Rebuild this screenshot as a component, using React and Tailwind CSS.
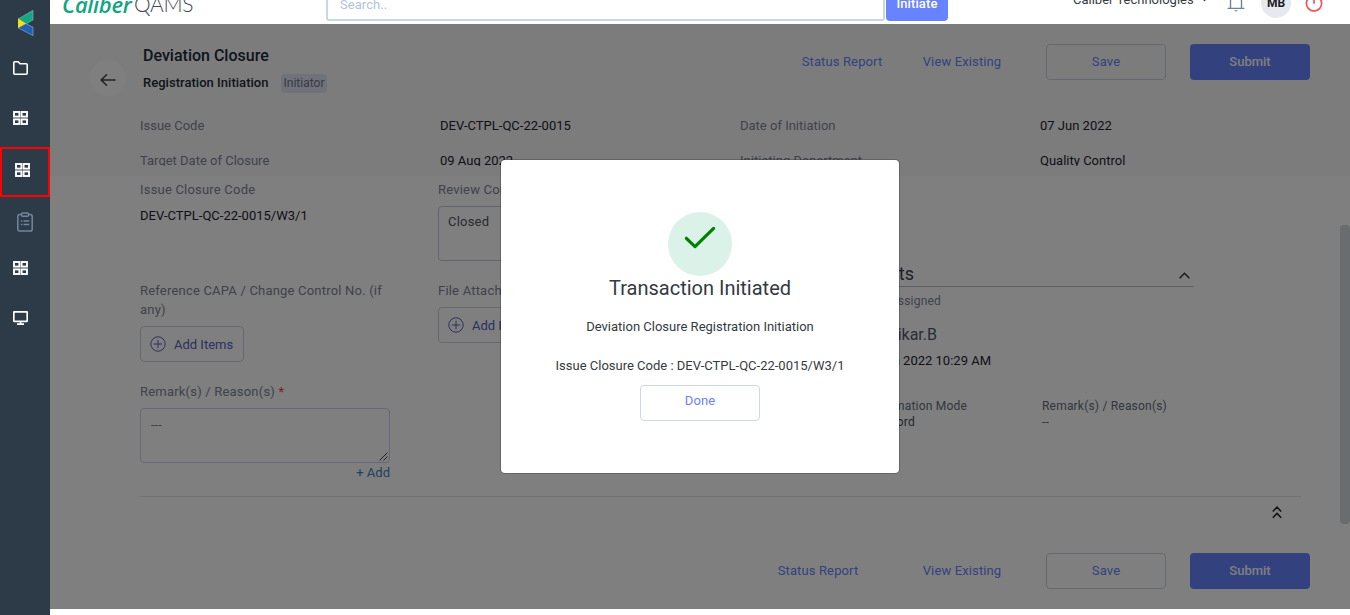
import React from "react";

function GridIcon() {
  return (
    <svg width="15" height="14" viewBox="0 0 15 14" fill="none" stroke="#fff" strokeWidth="1.9">
      <rect x="1" y="1" width="5.4" height="4.6" />
      <rect x="8.6" y="1" width="5.4" height="4.6" />
      <rect x="1" y="8.4" width="5.4" height="4.6" />
      <rect x="8.6" y="8.4" width="5.4" height="4.6" />
    </svg>
  );
}

function Sidebar() {
  return (
    <nav className="flex h-full w-[50px] shrink-0 flex-col bg-[#2d3a48] text-white">
      <div className="flex h-[43px] pl-[17px] pt-[9px]">
        <svg width="18" height="29" viewBox="0 0 18 29">
          <path d="M16 1.3 1 10l7.6 5.2L16 11z" fill="#12a785" stroke="#8fb5b0" strokeWidth=".6" />
          <path d="M8.8 14.6 16 18.2v8.4L1 18.8z" fill="#2360b5" stroke="#9db4d0" strokeWidth=".6" />
          <path d="M1 9.4v9.6l8-4.6z" fill="#f7dd13" />
        </svg>
      </div>
      <div className="flex h-[50px] items-center pl-[13px]">
        <svg width="15" height="14" viewBox="0 0 15 14" fill="none" stroke="#fff" strokeWidth="1.6" strokeLinejoin="round">
          <path d="M.8 1.8a1 1 0 0 1 1-1h3.4L7 2.8h6.2a1 1 0 0 1 1 1v8.4a1 1 0 0 1-1 1H1.8a1 1 0 0 1-1-1z" />
        </svg>
      </div>
      <div className="flex h-[50px] items-center pl-[13px]"><GridIcon /></div>
      <div className="mt-1 flex h-[50px] items-center border-2 border-[#f00] pb-1 pl-[13px]"><GridIcon /></div>
      <div className="flex h-[50px] items-center justify-center">
        <svg width="16" height="20" viewBox="0 0 16 20" fill="none" stroke="#75879c" strokeWidth="1.5" strokeLinejoin="round">
          <path d="M4.5 2.5H2.6A1.8 1.8 0 0 0 .8 4.3v12.9A1.8 1.8 0 0 0 2.6 19h10.8a1.8 1.8 0 0 0 1.8-1.8V4.3a1.8 1.8 0 0 0-1.8-1.8h-1.9" />
          <rect x="4.5" y=".9" width="7" height="3.3" rx="1.3" />
          <path d="M3.8 9h1.5M6.5 9h5.7M3.8 12.6h1.5M6.5 12.6h5.7" />
        </svg>
      </div>
      <div className="flex h-[42px] items-center pl-[13px]"><GridIcon /></div>
      <div className="flex h-[58px] items-center pl-[13px]">
        <svg width="15" height="14" viewBox="0 0 15 14" fill="none" stroke="#fff" strokeWidth="1.7" strokeLinejoin="round">
          <rect x=".8" y=".8" width="13.4" height="9.6" rx=".6" /><path d="M7.5 10v3M4 13.1h7" />
        </svg>
      </div>
    </nav>
  );
}

function Header() {
  return (
    <header className="flex h-6 shrink-0 items-end overflow-hidden bg-white">
      <div className="flex h-10 w-[276px] shrink-0 items-end pb-[7px] pl-[12px] leading-[26px]">
        <span className="w-[72px] whitespace-nowrap font-['Open_Sans'] text-[22px] font-semibold italic tracking-[-0.3px] text-[#12a583]">Caliber</span>
        <span className="whitespace-nowrap font-[Lato] text-[21px] font-light tracking-[-0.3px] text-[#3f4652]">QAMS</span>
      </div>
      <div className="mb-[3px] flex h-9 w-[559px] shrink-0 items-center rounded-[3px] border-2 border-[#c9d6e4] pl-3 pt-1 text-[13px] tracking-[0.05px] text-[#b4c2db]">Search..</div>
      <div className="mb-[3px] ml-px flex h-9 w-[62px] shrink-0 items-center justify-center rounded-[4px] bg-[#6783ff] pt-[2px] text-[13px] font-medium tracking-[0.1px] text-white">Initiate</div>
      <div className="flex h-10 grow items-center">
        <span className="ml-[125px] w-[122px] whitespace-nowrap pb-2 text-[13px] text-[#343b45]">Caliber Technologies</span>
        <svg className="ml-[7px] mb-2" width="5" height="4" viewBox="0 0 5 4"><path d="M0 .5h5L2.5 3.5z" fill="#343b45" /></svg>
        <svg className="ml-[20px] mb-[3px]" width="18" height="20" viewBox="0 0 18 20" fill="none" stroke="#71839a" strokeWidth="1.4">
          <path d="M3.5 15V8a5.5 5.5 0 0 1 11 0v7M.6 15.4h16.8" /><path d="M7 17.2h4l-2 1.6z" fill="#71839a" stroke="none" />
        </svg>
        <div className="ml-4 mb-[3px] flex size-[30px] items-center justify-center rounded-full bg-[#e6eaee] text-[12px] font-bold text-[#1c2024]">MB</div>
        <svg className="ml-[14px] mb-[2px]" width="18" height="20" viewBox="0 0 18 20" fill="none" stroke="#f4515c" strokeWidth="1.7" strokeLinecap="round">
          <path d="M5 4a7.6 7.6 0 1 0 8 0M9 1v9" />
        </svg>
      </div>
    </header>
  );
}

function Actions({ spread }) {
  return (
    <div className="flex text-center text-[13px] leading-9 tracking-[0.13px] text-[#6783ff]">
      <span className={spread ? "mr-6 w-[120px]" : "w-[120px]"}>Status Report</span>
      <span className="mr-6 w-[120px]">View Existing</span>
      <span className="mr-6 h-9 w-[120px] rounded-[4px] border border-[#c9d3e0] leading-[34px]">Save</span>
      <span className="h-9 w-[120px] rounded-[4px] bg-[#6783ff] font-medium tracking-normal text-white">Submit</span>
    </div>
  );
}

function AddItems() {
  return (
    <div className="flex h-9 w-[104px] items-center whitespace-nowrap rounded-[4px] border border-[#c9d3e0] pl-[9px] tracking-normal text-[#5560c4]">
      <svg className="mr-2 shrink-0" width="16" height="16" viewBox="0 0 16 16" fill="none" stroke="currentColor"><circle cx="8" cy="8" r="7.2" /><path d="M8 3.8v8.4M3.8 8h8.4" /></svg>
      <span className="pt-px">Add Items</span>
    </div>
  );
}

const info = [
  ["Issue Code", "DEV-CTPL-QC-22-0015", "Date of Initiation", "07 Jun 2022"],
  ["Target Date of Closure", "09 Aug 2022", "Initiating Department", "Quality Control"],
];

function PageHead() {
  return (
    <section className="h-[152px] shrink-0 bg-[#f9f9f9] tracking-normal">
      <div className="flex h-[84px] pl-10 pr-10 pt-5">
        <div className="mt-4 flex size-9 items-center justify-center rounded-full bg-white">
          <svg className="mt-1" width="16" height="14" viewBox="0 0 16 14" fill="none" stroke="#3b424c" strokeWidth="1.5"><path d="M15.5 7H1.5M7 1.2 1.2 7 7 12.8" /></svg>
        </div>
        <div className="ml-[17px] grow">
          <h1 className="h-6 text-[16px] font-medium leading-6 text-[#212b3a]">Deviation Closure</h1>
          <div className="mt-[5px] flex h-5 items-center">
            <h2 className="w-[138px] whitespace-nowrap text-[13px] font-medium tracking-[0.03px] text-[#212b3a]">Registration Initiation</h2>
            <span className="h-[19px] w-[46px] rounded-[4px] bg-[#e1e5f7] text-center text-[12px] leading-[19px] text-[#6e7484]">Initiator</span>
          </div>
        </div>
        <Actions />
      </div>
      <div className="h-[58px] overflow-hidden pl-[90px]">
        {info.map((r) => (
          <div key={r[0]} className="grid h-[35px] grid-cols-[300px_300px_300px_200px] leading-[35px]">
            <span className="text-[#7d8594]">{r[0]}</span>
            <span className="text-[#1d2430]">{r[1]}</span>
            <span className="text-[#7d8594]">{r[2]}</span>
            <span className="text-[#1d2430]">{r[3]}</span>
          </div>
        ))}
      </div>
    </section>
  );
}

function Form() {
  return (
    <div className="flex h-[320px] text-[#7d8594]">
      <div className="w-[250px] pt-1">
        <p className="h-[26px] leading-5">Issue Closure Code</p>
        <p className="h-[75px] leading-5 tracking-normal text-[#1d2430]">DEV-CTPL-QC-22-0015/W3/1</p>
        <p className="h-[45px] leading-[19px]">Reference CAPA / Change Control No. (if any)</p>
        <AddItems />
        <p className="mt-5 h-[26px] leading-5">Remark(s) / Reason(s) <span className="text-[#f03a48]">*</span></p>
        <div className="flex h-[55px] justify-between rounded-[4px] border border-[#cdd0ee] pl-[10px] pt-[6px] leading-5 tracking-normal">
          ---
          <svg className="mt-auto mr-px mb-px" width="9" height="9" viewBox="0 0 9 9" stroke="#444"><path d="M.5 8.5l8-8M4.5 8.5l4-4" /></svg>
        </div>
        <p className="text-right leading-5 tracking-normal text-[#3b82c4]">+ Add</p>
      </div>
      <div className="ml-12 w-[250px] pt-1">
        <p className="h-[26px] leading-5">Review Comments</p>
        <div className="h-[55px] rounded-[4px] border border-[#c3cbe0] pl-[9px] pt-[5px] leading-5 text-[#4c5564]">Closed</div>
        <p className="mt-5 h-[26px] leading-5">File Attachments</p>
        <AddItems />
      </div>
      <div className="ml-[52px] w-[454px] pt-[84px]">
        <div className="flex h-[27px] items-center justify-between border-b border-[#bfc3c9] text-[18px] tracking-normal text-[#3a424f]">
          <span className="w-[174px] text-right">Comments</span>
          <svg className="mr-1 mt-[5px]" width="11" height="7" viewBox="0 0 11 7" fill="none" stroke="#333" strokeWidth="1.5"><path d="M.6 6.2 5.5 1.2l4.9 5" /></svg>
        </div>
        <p className="mt-1 w-[201px] text-right text-[12px] leading-5">assigned</p>
        <p className="mt-3 w-[197px] text-right text-[16px] leading-6 tracking-normal text-[#545c69]">Ratnikar.B</p>
        <p className="mt-1 w-[251px] text-right leading-5 tracking-normal text-[#1d2430]">07 Jun 2022 10:29 AM</p>
        <div className="mt-[27px] flex text-[12px] leading-4 tracking-[0.2px] text-[#646c7a]">
          <div className="w-[302px]">
            <p className="w-[227px] text-right">Confirmation Mode</p>
            <p className="w-[175px] text-right text-[#454d5a]">Password</p>
          </div>
          <div>
            <p>Remark(s) / Reason(s)</p>
            <p>--</p>
          </div>
        </div>
      </div>
    </div>
  );
}

function Modal() {
  return (
    <div className="absolute inset-x-0 top-0 flex h-[585px] justify-center bg-black/50 pt-[136px] tracking-normal">
      <div className="flex h-[313px] w-[398px] flex-col items-center rounded-[4px] bg-white pt-[52px] text-[#343a42] shadow-[0_0_0_1px_rgba(0,0,0,0.2)]">
        <div className="size-16 rounded-full bg-[#dbf2e8]">
          <svg width="64" height="64" viewBox="0 0 64 64" fill="none" stroke="#008000" strokeWidth="3.2" strokeLinecap="round" strokeLinejoin="round"><path d="M18.4 26.3 27 34.6 45.6 16.4" /></svg>
        </div>
        <h3 className="h-6 text-[20px] leading-6">Transaction Initiated</h3>
        <p className="mt-[17px] leading-5">Deviation Closure Registration Initiation</p>
        <p className="mt-[19px] leading-5">Issue Closure Code : DEV-CTPL-QC-22-0015/W3/1</p>
        <div className="mt-[9px] h-9 w-[120px] rounded-[4px] border border-[#cbd8e6] text-center leading-[29px] tracking-[0.1px] text-[#6783ff]">Done</div>
      </div>
    </div>
  );
}

export default function App() {
  return (
    <div className="flex h-[615px] w-[1350px] overflow-hidden bg-white font-[Roboto,sans-serif]">
      <Sidebar />
      <div className="flex w-[1300px] flex-col">
        <Header />
        <main className="relative flex h-[585px] flex-col bg-white text-[13px] tracking-[0.2px]">
          <PageHead />
          <div className="flex grow">
            <div className="w-[1290px] pl-[90px]">
              <Form />
              <div className="w-[1161px] border-t border-[#e2e3e5]">
                <svg className="ml-auto mr-[19px] mt-[9px]" width="10" height="13" viewBox="0 0 10 13" fill="none" stroke="#222" strokeWidth="1.5"><path d="M.8 5.6 5 1.2l4.2 4.4M.8 11.800 5 7.400l4.200 4.400" /></svg>
              </div>
              <div className="mt-[34px] flex justify-end pr-[30px]"><Actions spread /></div>
            </div>
            <div className="mt-[49px] h-[299px] w-[10px] rounded-[4px] bg-[#d3dae0]" />
          </div>
          <Modal />
        </main>
      </div>
    </div>
  );
}
